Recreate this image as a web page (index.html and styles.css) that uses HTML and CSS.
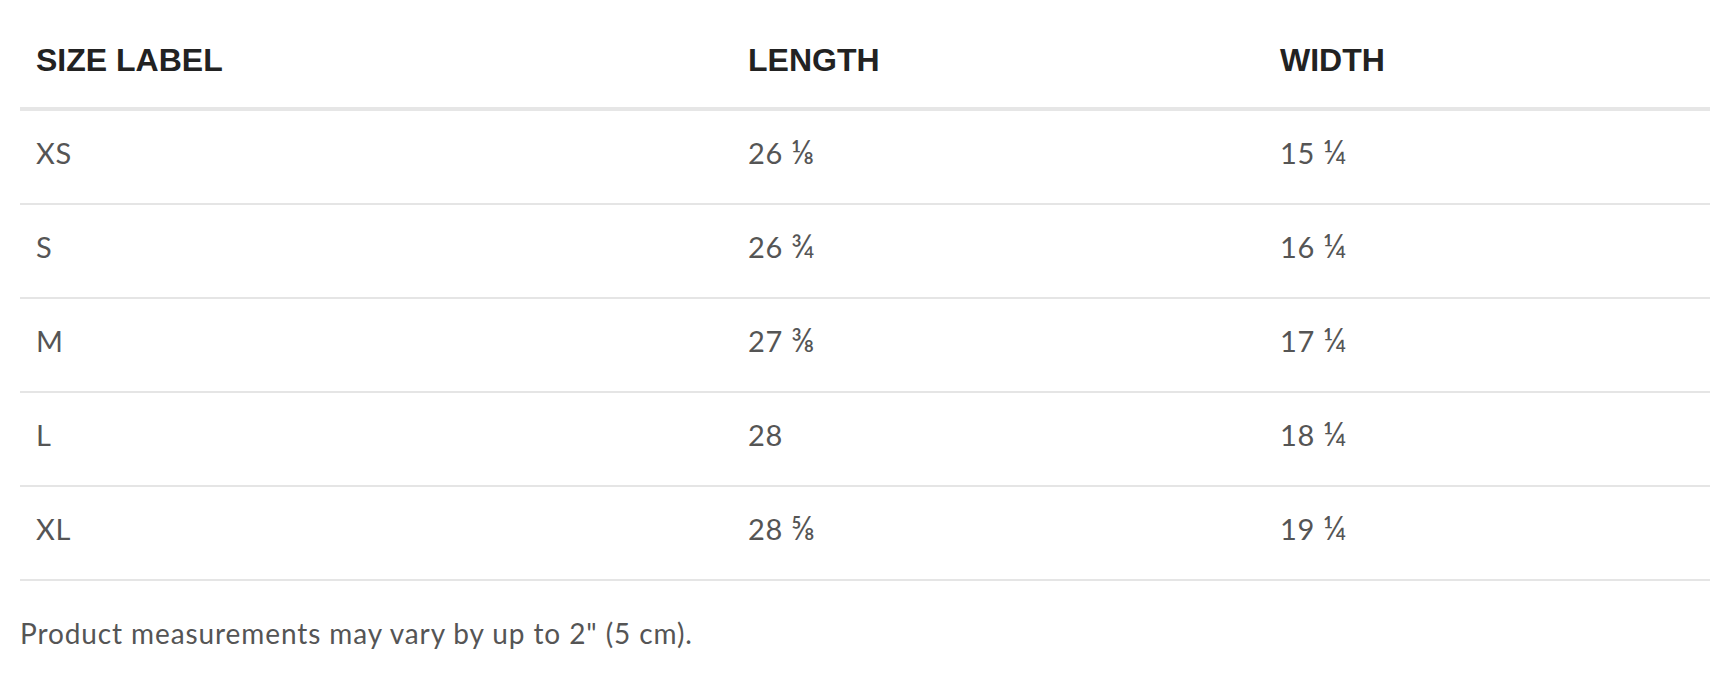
FILE: index.html
```html
<!DOCTYPE html>
<html lang="en">
<head>
<meta charset="utf-8">
<title>Size guide</title>
<link rel="stylesheet" href="styles.css">
</head>
<body>
<div class="guide">
  <table class="sizes">
    <colgroup>
      <col class="c1"><col class="c2"><col class="c3">
    </colgroup>
    <thead>
      <tr><th>SIZE LABEL</th><th>LENGTH</th><th>WIDTH</th></tr>
    </thead>
    <tbody>
      <tr><td>XS</td><td>26 <span class="frac">⅛</span></td><td>15 <span class="frac">¼</span></td></tr>
      <tr><td>S</td><td>26 <span class="frac">¾</span></td><td>16 <span class="frac">¼</span></td></tr>
      <tr><td>M</td><td>27 <span class="frac">⅜</span></td><td>17 <span class="frac">¼</span></td></tr>
      <tr><td>L</td><td>28</td><td>18 <span class="frac">¼</span></td></tr>
      <tr><td>XL</td><td>28 <span class="frac">⅝</span></td><td>19 <span class="frac">¼</span></td></tr>
    </tbody>
  </table>
  <p class="note">Product measurements may vary by up to 2" (5 cm).</p>
</div>
</body>
</html>
```

FILE: styles.css
```css
html, body {
  margin: 0;
  padding: 0;
  background: #ffffff;
}
.guide {
  margin-left: 20px;
  width: 1690px;
}
.sizes {
  width: 1690px;
  table-layout: fixed;
  border-collapse: collapse;
  border-spacing: 0;
}
.c1 { width: 712px; }
.c2 { width: 532px; }
.c3 { width: 446px; }
.sizes th {
  font-family: "Liberation Sans", Arial, sans-serif;
  font-weight: 700;
  font-size: 32px;
  line-height: 36px;
  color: #222222;
  text-align: left;
  padding: 42px 16px 29px 16px;
  border-bottom: 4px solid #e6e6e6;
}
.sizes td {
  font-family: Lato, "Noto Sans", sans-serif;
  font-size: 29px;
  line-height: 34px;
  height: 34px;
  letter-spacing: 0.6px;
  color: #555555;
  padding: 25px 16px 33px 16px;
  border-bottom: 2px solid #e5e5e5;
}
.frac {
  font-size: 32px;
  line-height: 0;
  letter-spacing: 0;
}
.note {
  margin: 35px 0 0 0;
  font-family: Lato, "Noto Sans", sans-serif;
  font-size: 28px;
  line-height: 34px;
  letter-spacing: 0.9px;
  color: #555555;
}
```
